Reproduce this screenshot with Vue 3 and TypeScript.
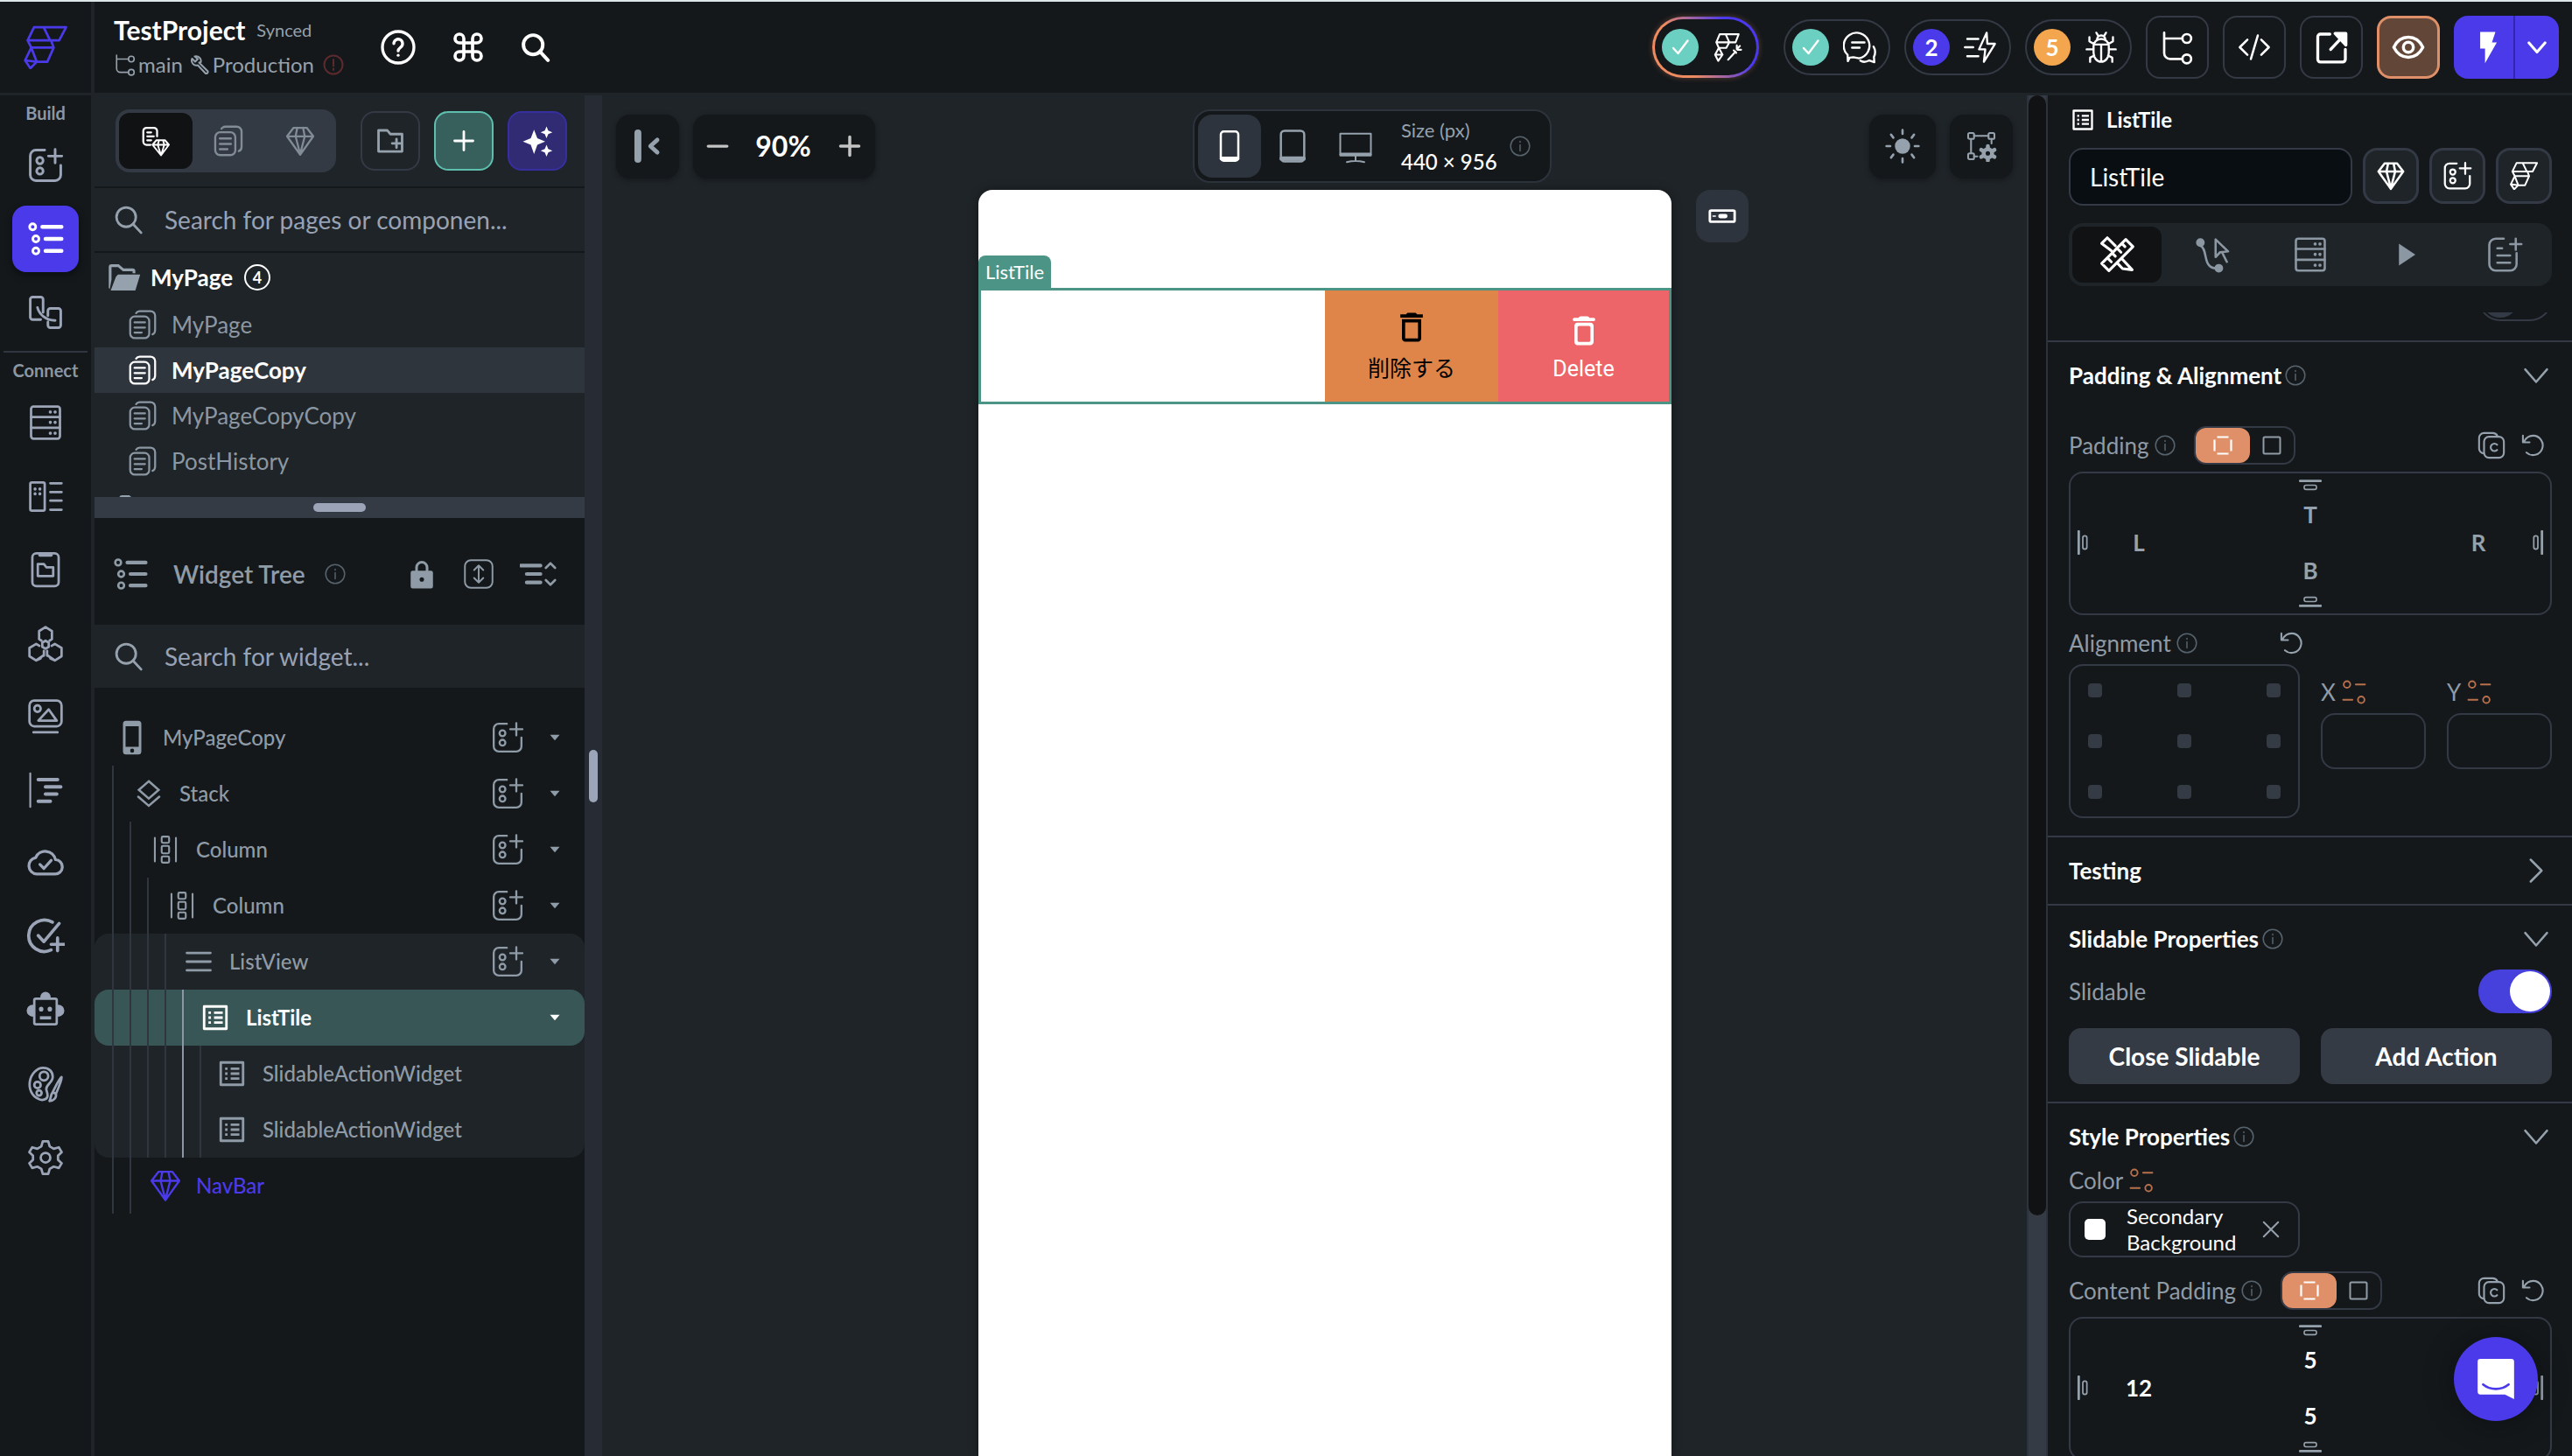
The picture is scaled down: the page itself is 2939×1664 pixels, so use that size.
<script setup lang="ts">
import { h, ref } from 'vue'

/* Icon bodies. A name maps to its markup inside a 24-unit box. */
const fillOnly = 'fill="currentColor" stroke="none"'
const icons: Record<string, string> = {
  branch: '<path d="M3 2v14a4 4 0 0 0 4 4h8.500M3 6h12.500"/><circle cx="18.500" cy="6" r="3"/><circle cx="18.500" cy="20" r="3"/>',
  wrench: '<path d="M10.500 9.500 20.500 19.500a2 2 0 0 1-2.500 2.500L9 12.500A5.500 5.500 0 0 1 2.500 5l3.500 3.500 3-3L5.500 2.500a5.500 5.500 0 0 1 7 6.500z"/>',
  alert: '<circle cx="12" cy="12" r="10.500"/><path d="M12 6v7.500M12 16.500v1.500"/>',
  help: '<circle cx="12" cy="12" r="10.800"/><path d="M9 9.500a3 3 0 1 1 4.800 2.400c-1 .8-1.800 1.300-1.800 2.600"/><circle cx="12" cy="17.500" r="1" fill="currentColor" stroke="none"/>',
  cmd: '<path d="M18 3a3 3 0 0 0-3 3v12a3 3 0 1 0 3-3H6a3 3 0 1 0 3 3V6a3 3 0 1 0-3 3h12a3 3 0 0 0 0-6z"/>',
  search: '<circle cx="10" cy="10" r="7.800"/><path d="M15.500 15.500 22 22.500"/>',
  addWidget: '<path d="M11.500 2.500H6a3.500 3.500 0 0 0-3.500 3.500v12A3.500 3.500 0 0 0 6 21.500h12a3.500 3.500 0 0 0 3.500-3.500v-6M18 2v8.500M13.800 6.200h8.400"/><circle cx="8.500" cy="9" r="2"/><circle cx="8.500" cy="15.500" r="2"/>',
  tree: '<circle cx="4" cy="4.500" r="1.900"/><circle cx="6" cy="12" r="1.900"/><circle cx="6" cy="19.500" r="1.900"/><path d="M10 4.500h12M12 12h10M12 19.500h10" stroke-width="2.400"/>',
  flow: '<path d="M10.500 12V4a1.500 1.500 0 0 0-1.500-1.500H4A1.500 1.500 0 0 0 2.500 4v11A1.500 1.500 0 0 0 4 16.500h5M13.500 14v-3a1.500 1.500 0 0 1 1.500-1.500h5a1.500 1.500 0 0 1 1.500 1.500v9a1.500 1.500 0 0 1-1.500 1.500h-5a1.500 1.500 0 0 1-1.500-1.500v-2M7 9c1 4 5 8 11 8"/>',
  server: '<rect x="3" y="2" width="18" height="20" rx="1.500"/><path d="M3 8.500h18M3 15.200h18"/><path d="M15 5.300v.1M18 5.300v.1M15 11.800v.1M18 11.800v.1M15 18.600v.1M18 18.600v.1" stroke-width="2"/>',
  api: '<rect x="2.500" y="3.500" width="9" height="17.500" rx="1"/><path d="M5.500 7.500v.1M8.500 7.500v.1M5.500 10.500v.1M8.500 10.500v.1" stroke-width="1.900"/><path d="M15 4h7M15 9.500h7M15 14.800h7M15 20.500h7"/>',
  appFile: '<rect x="3.800" y="1.800" width="16.400" height="20.500" rx="2.500"/><path d="M8.500 3h7" stroke-width="2"/><path d="M7.200 8.500h3.800l1.500 2h4.300V16H7.200z"/>',
  hex: '<path d="M9.500 10.500 8 9.500v-5l4-2.500 4 2.500v5l-1.500 1M9 21.500 6.200 22.800 2 20.200V15l4.200-2.500 2 1.200M11 19.500l-4.800 3.200M15 21.500l2.800 1.300L22 20.200V15l-4.200-2.500-2 1.200M13 19.500l4.800 3.200M11 16.800v3M13 16.800v3"/><path d="M12 10.500l2 1.200v2.600l-2 1.200-2-1.200v-2.600z"/>',
  media: '<rect x="2" y="2" width="20" height="16" rx="3"/><circle cx="7" cy="7" r="2"/><path d="M7.500 14.500 14 7.500l5 7zM4.500 21.800h15"/>',
  timeline: '<path d="M2.500 1.500v21" stroke-width="1.200"/><path d="M7.500 5.500h12M12 10h9.500M12 14.500h7M7.500 19h7.500" stroke-width="2.200"/>',
  cloud: '<path d="M6.500 18.500a5.200 5.200 0 0 1-.6-10.300 6.500 6.500 0 0 1 12.300 1.300 4.500 4.500 0 0 1-.4 9zM8.500 12.500l2.500 2.500 4.500-5" stroke-width="1.800"/>',
  checkPlus: '<path d="M15.500 20a9.800 9.800 0 1 1 .8-17.300M7.500 11l3.500 3.800L20.500 3.500M19.500 12.500v8M15.500 16.500h8" stroke-width="2"/>',
  robot: '<rect x="5" y="4.500" width="14" height="16" rx="1"/><path d="M9.500 3.500a2.500 2.500 0 0 1 5 0zM4 9a2.800 2.800 0 0 0 0 6zM20 9a2.800 2.800 0 0 1 0 6z" fill="currentColor"/><path d="M9.300 11v.2M14.700 11v.2" stroke-width="2.800"/><path d="M8.500 16.500h7" stroke-width="2" stroke-linecap="butt"/>',
  palette: '<path d="M12.500 21c-1.500 1-3.500 1-5 .2C3.500 19.300 1.500 15 2.200 10.500S6.500 1.800 10.500 1.800c3.500 0 6 2.200 6 5.700 0 3.500-4 4.500-4 7.500 0 2 2 4 0 6z"/><circle cx="11" cy="7" r="2.700"/><circle cx="7" cy="12.500" r="2"/><circle cx="8" cy="17.500" r="1.600"/><path d="M22 7.500c.5 1-3 9.500-3.500 10.500l-2-1C17 16 21 7.500 22 7.500zM16.500 17l2 1c.5 2.500-1.500 4.500-4 4.500 1-1.500.5-4 2-5.500z"/>',
  gear: '<circle cx="12" cy="12" r="3"/><path d="M10.300 1.800h3.400l.9 3.200 2.500 1.500 3.200-.9 1.800 3-2.300 2.200v2.500l2.300 2.200-1.800 3-3.200-.9-2.500 1.400-.9 3.200h-3.400L9.400 19l-2.500-1.400-3.200.9-1.800-3 2.300-2.200v-2.500L1.900 8.600l1.800-3 3.200.9L9.400 5z"/>',
  gem: '<path d="M7 2h10l5 6.500L12 22.500 2 8.500zM2 8.500h20M9.800 2 8.500 8.500 12 22l3.500-13.500L14.200 2"/>',
  pageGem: '<path d="M8 15H5a2.500 2.500 0 0 1-2.500-2.500v-8A2.500 2.500 0 0 1 5 2h5.500A2.500 2.500 0 0 1 13 4.500v4M5.500 5.500h3M5.500 8.500h5M5.500 11.500h3"/><path d="M12.500 11.500h6.500l3 3.500-6 8-6.500-8zM9.500 15h12.500M14.500 11.500 13.500 15l2.500 8 2.500-8-1-3.500" stroke-width="1.300"/>',
  pages: '<rect x="2.500" y="5.800" width="14.500" height="16.500" rx="3.500"/><path d="M7 3.200C7.600 2.300 8.500 1.700 9.700 1.700H18a3.500 3.500 0 0 1 3.500 3.500v11c0 1.500-.7 2.700-2 3.200M5.800 10.300h8M5.800 14.200h8M5.800 18h5.500"/>',
  folderPlus: '<path d="M2.500 3.500h7l2.500 3h9.500v14h-19zM17 10.500v7M13.500 14h7"/>',
  plus: '<path d="M12 3v18M3 12h18"/>',
  minus: '<path d="M2 12h20"/>',
  sparkle: `<g ${fillOnly}><path d="M9.500 3.500 12 10l6 2.500L12 15l-2.500 7L7 15l-6-2.500L7 10z"/><path d="M19 1l1.300 3.200L23.500 5.500l-3.200 1.300L19 10l-1.300-3.200L14.500 5.500l3.200-1.300zM19 15l1.300 3.200 3.200 1.300-3.200 1.300L19 24l-1.300-3.200-3.200-1.300 3.200-1.300z"/></g>`,
  folderOpen: `<path ${fillOnly} d="M7.500 10H23.500L20 21.500H2.200L6 11.500zM.8 4.500A2 2 0 0 1 2.800 2.500H8l3.500 3h6.500a2 2 0 0 1 2 2V9h-2V7.500h-7l-3.500-3H2.800v9L1.500 20.500l-.7-1z"/>`,
  lock: `<path ${fillOnly} d="M5 9.500h2V7a5 5 0 0 1 10 0v2.500h2a1.500 1.500 0 0 1 1.500 1.500v10.500A1.500 1.500 0 0 1 19 23H5a1.500 1.500 0 0 1-1.500-1.500V11A1.500 1.500 0 0 1 5 9.500zm4 0h6V7a3 3 0 0 0-6 0zm3 5a1.700 1.700 0 1 0 0 3.400 1.700 1.700 0 0 0 0-3.400z" fill-rule="evenodd"/>`,
  upDown: '<rect x="1.500" y="1.500" width="21" height="21" rx="4.500"/><path d="M12 5.500v13M8.500 9 12 5.500 15.500 9M8.500 15l3.500 3.500 3.500-3.500"/>',
  collapse: '<path d="M.5 6.500h13M4.500 12h9M4.500 17.500h9" stroke-width="2.400"/><path d="M17 8l3-3 3 3M17 16l3 3 3-3"/>',
  phone: `<path ${fillOnly} d="M8 1h8a2 2 0 0 1 2 2v18a2 2 0 0 1-2 2H8a2 2 0 0 1-2-2V3a2 2 0 0 1 2-2zm-.3 3.500v13.500h8.600V4.500zM12 19.200a1.300 1.300 0 1 0 0 2.600 1.300 1.300 0 0 0 0-2.600z" fill-rule="evenodd"/>`,
  stack: '<path d="M12 2l8 7-8 7-8-7zM3.500 14.500 12 21.800l8.500-7.300" stroke-linejoin="miter" stroke-width="1.800"/>',
  column: '<path d="M3.500 2.500v19M20.500 2.500v19"/><rect x="9" y="1.500" width="6" height="5" rx="1"/><rect x="9" y="9" width="6" height="6" rx="1"/><rect x="9" y="17.500" width="6" height="5" rx="1"/>',
  list: '<path d="M2.500 5h19M2.500 12h19M2.500 19h19" stroke-width="2"/>',
  tile: '<rect x="3" y="3" width="18" height="18" stroke-width="2"/><path d="M11 8h7M11 12h7M11 16h7M6.500 8h2M6.500 12h2M6.500 16h2" stroke-width="2" stroke-linecap="butt"/>',
  caret: `<path ${fillOnly} d="M1 5.500h22L12 18.500z"/>`,
  chevDown: '<path d="M2 6.500 12 18 22 6.500"/>',
  chevRight: '<path d="M7 2l10 10L7 22"/>',
  info: '<circle cx="12" cy="12" r="10.800"/><path d="M12 10.500v7M12 6.500v1"/>',
  hide: '<path d="M5 2.500v19" stroke-width="5"/><path d="M19 7.500 14 12l5 4.500" stroke-width="3"/>',
  devPhone: '<rect x="6" y="2" width="12" height="20" rx="2"/><path d="M6.500 20.500h11" stroke-width="2.500"/>',
  devTablet: '<rect x="4" y="1.500" width="16" height="21" rx="2.500"/><path d="M4.500 20.500h15" stroke-width="3"/>',
  desktop: '<path d="M1.500 3.500h21v15h-21zM12 19v3M6 23c4-1 8-1 12 0"/><path d="M2 17.500h20" stroke-width="2"/>',
  notch: '<rect x="2" y="7.500" width="20" height="9" rx="1" stroke-width="2"/><path d="M10.500 12h4" stroke-width="3.500"/><path d="M4.500 12h2" stroke-width="1"/>',
  sun: '<circle cx="12" cy="12" r="5" fill="currentColor" stroke="none"/><path d="M12 1.500V4M12 20v2.500M1.500 12H4M20 12h2.500M4.500 4.500l1.500 2M18 17.500l1.500 2M4.500 19.500l1.500-2M18 6.500l1.500-2"/>',
  nodes: '<rect x="2" y="2" width="4.500" height="4.500" rx="1"/><rect x="17.500" y="2" width="4.500" height="4.500" rx="1"/><rect x="2" y="17.500" width="4.500" height="4.500" rx="1"/><path d="M6.500 4.200h11M4.200 6.500v11M19.800 6.500V10M6.500 19.800H9"/><circle cx="17" cy="17.500" r="3.200" stroke-width="3"/><path d="M17 12v2M17 21v2M12 14.800l1.800 1M20.200 19.200l1.800 1M12 20.200l1.800-1M20.200 15.800l1.800-1" stroke-width="3"/>',
  check: '<path d="M4 13l5.500 6L20.500 4.500"/>',
  chat: '<path d="M4.800 19.500 3.500 22l-.2-4.500A9.300 9.300 0 1 1 11.500 20l-4-.8z"/><path d="M6.500 8.500h9M6.500 12.300h5.500M22 11.500c1.500 2.500 1.300 5.500.3 7.500l.3 3.800-3.600-1.300c-2.300 1.200-5 1.200-6.500.2"/>',
  boltLines: '<path d="M16.500 1.500 11 13.500h4.500L14.500 22.500 22.500 9.500h-5.500zM2.500 6h8M.8 12h6M2.500 18.500h8"/>',
  bug: '<path d="M6.500 11a5.500 5 0 0 1 11 0v5a5.500 6.500 0 0 1-11 0zM7 10h10M12 10v12M9 6.500a3 3 0 0 1 6 0M8.500 1.500l1.500 2.500M15.500 1.500 14 4M6.500 13.500h-5M22.500 13.500h-5M6.500 9.500l-3-1.800v-3M17.500 9.500l3-1.800v-3M7 18l-3 1.500v3M17 18l3 1.500v3"/>',
  code: '<path d="M7 6.500 1.500 12 7 17.500M17 6.500l5.500 5.500-5.500 5.500M14.500 3.500l-5 17"/>',
  open: '<path d="M11 3H4.500A1.800 1.800 0 0 0 2.700 4.800v15.500a1.800 1.800 0 0 0 1.800 1.800h15.300a1.800 1.800 0 0 0 1.800-1.800V13.500M11.500 13.500 20.500 4"/><path d="M14.500 2.500h7.500v8z" fill="currentColor"/>',
  eye: '<path d="M1.500 12C4 7 8 4.800 12 4.800S20 7 22.500 12C20 17 16 19.200 12 19.200S4 17 1.500 12z"/><circle cx="12" cy="12" r="3.600"/>',
  bolt: `<path ${fillOnly} d="M7 1h11l-2.500 7.500H19L10.500 23.500V13H7z"/>`,
  ruler: '<path d="M2.500 17.500 17.500 2.500l4.500 4.500L7 22zM15 5l2 2M12 8l2.500 2.500M9 11l2 2M6 14l2.500 2.500M8.500 9.500 2.500 5l3.500-3.500 5 5M15.500 15l6 6.500-6-.8-3-3.200"/>',
  action: '<circle cx="4" cy="4.500" r="2" fill="currentColor"/><circle cx="15.500" cy="20.500" r="2" fill="currentColor"/><path d="M4 6.500c5 2 1 14 10 14M13.500 2.500v11l2.800-3 5-.5zM17.500 10.500l3 6"/>',
  play: `<path ${fillOnly} d="M5 2v20L20 12z"/>`,
  docPlus: '<path d="M12 2H7a4 4 0 0 0-4 4v12a4 4 0 0 0 4 4h9a4 4 0 0 0 4-4v-7M19.500 2v7M16 5.500h7M8 8h3M8 12.500h8M8 17h8"/>',
  corners: '<path d="M5.500 2.500h13M5.500 21.500h13M2.500 5.500v13M21.500 5.500v13" stroke-linecap="butt"/>',
  square: '<rect x="2.500" y="2.500" width="19" height="19" rx="1.500"/>',
  copy: '<path d="M6 18.500A4 4 0 0 1 2 14.500V6a4 4 0 0 1 4-4h7c1.800 0 3 .8 3.700 2.200"/><rect x="6" y="5" width="16" height="17" rx="4"/><path d="M16.500 11.500a3 3 0 1 0 0 4.200"/>',
  undo: '<path d="M2.500 2.500v6.500h6.500M3.500 8.500C5.500 4.500 9 2.500 12.500 2.500a9.500 9.500 0 1 1-6.500 16.500"/>',
  variable: '<circle cx="5.500" cy="5" r="3"/><circle cx="18.500" cy="19" r="3"/><path d="M13.500 5H22M2 19h8.500"/>',
  close: '<path d="M3 3l18 18M21 3 3 21"/>',
  edgeTop: '<path d="M1 8h22" stroke-width="2.400"/><rect x="5.500" y="12.500" width="13" height="4.500" rx="2"/>',
  edgeBottom: '<path d="M1 16h22" stroke-width="2.400"/><rect x="5.500" y="7" width="13" height="4.500" rx="2"/>',
  edgeLeft: '<path d="M8 1v22" stroke-width="2.400"/><rect x="12" y="5.500" width="4" height="13" rx="2"/>',
  edgeRight: '<path d="M16 1v22" stroke-width="2.400"/><rect x="8" y="5.500" width="4" height="13" rx="2"/>',
  trashSharp: `<path ${fillOnly} d="M6 19c0 1.100.9 2 2 2h8c1.100 0 2-.9 2-2V7H6v12zM8 9h8v10H8V9zm7.500-5l-1-1h-5l-1 1H5v2h14V4h-3.500z"/>`,
  trashRound: `<path ${fillOnly} d="M6 19c0 1.100.9 2 2 2h8c1.100 0 2-.9 2-2V9c0-1.100-.9-2-2-2H8c-1.100 0-2 .9-2 2v10zm3-10h6c.55 0 1 .45 1 1v8c0 .55-.45 1-1 1H9c-.55 0-1-.45-1-1v-8c0-.55.45-1 1-1zm6.500-5l-.71-.71c-.18-.18-.44-.29-.7-.29H9.910c-.26 0-.52.11-.7.29L8.500 4H6c-.55 0-1 .45-1 1s.45 1 1 1h12c.55 0 1-.45 1-1s-.45-1-1-1h-2.500z"/>`,
  logo: '<path d="M5.700 1H23.300L19.500 8.200H2.200zM11 1l3.500 7.200M2.200 8.200l2 4H16.500L15 8.200M4.200 12.200 7.200 20H13l3.500-7.800M4.200 12.200.8 19.200 3.700 23.500 7.200 20M.8 19.200 7.200 20"/>',
  logoWand: '<path d="M5.700 1.500H21L18.500 8H3zM10.500 1.500l3 6.500M3 8l2 4.500h6L13.500 8M5 12.500 2 18l2.500 5L8 18zM2 18h6M12.500 22l6-6.500M19.500 10.500v3M23 14h-3M22 11l-1.500 1.500M17 14.500l2 2"/>',
  smile: '<path fill="#fff" stroke="none" d="M3.500 1h17A1.500 1.500 0 0 1 22 2.500V23l-5-2.500H3.500A1.500 1.500 0 0 1 2 19V2.500A1.500 1.500 0 0 1 3.500 1z"/><path stroke="#4b3ae9" d="M5 15c4 3.300 10 3.300 14 0" />'
}

interface IcoProps {
  name: string
  size: number
  w?: number
}

const Ico = (p: IcoProps) =>
  h('svg', {
    viewBox: '0 0 24 24',
    width: p.size,
    height: p.size,
    fill: 'none',
    stroke: 'currentColor',
    'stroke-width': p.w ?? 1.5,
    'stroke-linecap': 'round',
    'stroke-linejoin': 'round',
    'aria-hidden': 'true',
    innerHTML: icons[p.name]
  })
Ico.props = ['name', 'size', 'w']

const buildItems = [
  { icon: 'addWidget', label: 'Widget palette' },
  { icon: 'tree', label: 'Widget tree', active: true },
  { icon: 'flow', label: 'Storyboard' }
]
const connectItems = [
  { icon: 'server', label: 'Database' },
  { icon: 'api', label: 'Data types' },
  { icon: 'appFile', label: 'App values' },
  { icon: 'hex', label: 'API calls' },
  { icon: 'media', label: 'Media assets' },
  { icon: 'timeline', label: 'Custom functions' },
  { icon: 'cloud', label: 'Cloud functions' },
  { icon: 'checkPlus', label: 'Tests' },
  { icon: 'robot', label: 'Agents' },
  { icon: 'palette', label: 'Theme' },
  { icon: 'gear', label: 'Settings' }
]

const pages = ['MyPage', 'MyPageCopy', 'MyPageCopyCopy', 'PostHistory']
const currentPage = ref('MyPageCopy')

interface TreeNode {
  icon: string
  label: string
  depth: number
  add?: boolean
  caret?: boolean
  kind?: 'selected' | 'component'
}
const tree: TreeNode[] = [
  { icon: 'phone', label: 'MyPageCopy', depth: 0, add: true, caret: true },
  { icon: 'stack', label: 'Stack', depth: 1, add: true, caret: true },
  { icon: 'column', label: 'Column', depth: 2, add: true, caret: true },
  { icon: 'column', label: 'Column', depth: 3, add: true, caret: true }
]
const subtree: TreeNode[] = [
  { icon: 'list', label: 'ListView', depth: 4, add: true, caret: true },
  { icon: 'tile', label: 'ListTile', depth: 5, caret: true, kind: 'selected' },
  { icon: 'tile', label: 'SlidableActionWidget', depth: 6 },
  { icon: 'tile', label: 'SlidableActionWidget', depth: 6 }
]
const tail: TreeNode[] = [{ icon: 'gem', label: 'NavBar', depth: 2, kind: 'component' }]
const treeGroups = [
  { id: 'top', nodes: tree },
  { id: 'sub', nodes: subtree },
  { id: 'tail', nodes: tail }
]

const tabs = [
  { icon: 'ruler', label: 'Properties' },
  { icon: 'action', label: 'Actions' },
  { icon: 'server', label: 'Backend query' },
  { icon: 'play', label: 'Animations' },
  { icon: 'docPlus', label: 'Documentation' }
]

const widgetName = ref('ListTile')
const slidable = ref(true)
const expanded = ref(false)
const content = ref({ top: '5', left: '12', right: '', bottom: '5' })
</script>

<template>
  <div class="app">
    <header class="topbar">
      <a class="brand" href="#" aria-label="Home"><Ico name="logo" :size="50" :w="1.3" /></a>
      <div class="project">
        <div class="line">
          <h1>TestProject</h1>
          <span class="synced">Synced</span>
        </div>
        <div class="line meta">
          <Ico name="branch" :size="26" /><span class="m1">main</span>
          <Ico name="wrench" :size="24" :w="2" /><span>Production</span>
          <Ico class="warn" name="alert" :size="24" :w="2" />
        </div>
      </div>
      <nav class="quick">
        <button aria-label="Help"><Ico name="help" :size="40" :w="2" /></button>
        <button aria-label="Shortcuts"><Ico name="cmd" :size="40" :w="2.2" /></button>
        <button aria-label="Search"><Ico name="search" :size="34" :w="2.8" /></button>
      </nav>
      <div class="status">
        <button class="pill ai" aria-label="AI ready">
          <span class="dot ok"><Ico name="check" :size="24" :w="2.4" /></span><Ico name="logoWand" :size="34" />
        </button>
        <button class="pill" aria-label="Comments">
          <span class="dot ok"><Ico name="check" :size="24" :w="2.4" /></span><Ico name="chat" :size="38" />
        </button>
        <button class="pill" aria-label="Optimizations">
          <span class="dot blue">2</span><Ico name="boltLines" :size="38" />
        </button>
        <button class="pill" aria-label="Issues">
          <span class="dot orange">5</span><Ico name="bug" :size="38" />
        </button>
        <button class="sq" aria-label="Branches"><Ico name="branch" :size="40" :w="1.6" /></button>
        <button class="sq" aria-label="Code"><Ico name="code" :size="38" :w="1.6" /></button>
        <button class="sq" aria-label="Open"><Ico name="open" :size="40" :w="2" /></button>
        <button class="sq preview" aria-label="Preview"><Ico name="eye" :size="38" :w="2.2" /></button>
        <div class="run">
          <button aria-label="Run"><Ico name="bolt" :size="38" /></button>
          <button aria-label="Run options"><Ico name="chevDown" :size="22" :w="3.4" /></button>
        </div>
      </div>
    </header>

    <div class="body">
      <nav class="rail">
        <span class="cap">Build</span>
        <button v-for="i in buildItems" :key="i.label" :aria-label="i.label" class="cell">
          <span :class="['tilebg', { on: i.active }]"><Ico :name="i.icon" :size="44" :w="1.6" /></span>
        </button>
        <hr />
        <span class="cap connect">Connect</span>
        <button v-for="i in connectItems" :key="i.label" :aria-label="i.label" class="cell">
          <Ico :name="i.icon" :size="44" />
        </button>
      </nav>

      <aside class="left">
        <section class="pagepane">
          <div class="tools">
            <div class="seg">
              <button class="on" aria-label="All"><Ico name="pageGem" :size="36" /></button>
              <button aria-label="Pages"><Ico name="pages" :size="38" /></button>
              <button aria-label="Components"><Ico name="gem" :size="36" /></button>
            </div>
            <div class="acts">
              <button aria-label="New folder"><Ico name="folderPlus" :size="34" :w="2" /></button>
              <button class="add" aria-label="Add page"><Ico name="plus" :size="28" :w="2.4" /></button>
              <button class="magic" aria-label="Generate"><Ico name="sparkle" :size="36" /></button>
            </div>
          </div>
          <label class="find">
            <Ico name="search" :size="34" :w="2" />
            <input type="text" aria-label="Search pages" placeholder="Search for pages or componen..." />
          </label>
          <div class="folder"><Ico name="folderOpen" :size="38" /><b>MyPage</b><span class="count">4</span></div>
          <button
            v-for="p in pages"
            :key="p"
            :class="['page', { on: p === currentPage }]"
            @click="currentPage = p"
          >
            <Ico name="pages" :size="36" />{{ p }}
          </button>
          <div class="folder next"><Ico name="folderOpen" :size="38" /></div>
        </section>
        <div class="grip"><i></i></div>

        <section class="treepane">
          <div class="treehead">
            <Ico name="tree" :size="42" />
            <h2>Widget Tree</h2>
            <Ico class="dim" name="info" :size="24" />
            <div class="headacts">
              <button aria-label="Lock"><Ico name="lock" :size="36" /></button>
              <button aria-label="Expand height"><Ico name="upDown" :size="36" :w="1.3" /></button>
              <button aria-label="Collapse all"><Ico name="collapse" :size="42" /></button>
            </div>
          </div>
          <label class="find">
            <Ico name="search" :size="34" :w="2" />
            <input type="text" aria-label="Search widgets" placeholder="Search for widget..." />
          </label>
          <div class="tree">
            <div v-for="g in treeGroups" :key="g.id" :class="['group', g.id]">
              <div v-for="(n, i) in g.nodes" :key="i" :class="['node', n.kind, 'd' + n.depth]">
                <i v-for="k in n.depth" :key="k" class="guide" :class="{ lit: g.id === 'sub' && k === 5 }" :style="{ left: k * 20 + 'px' }"></i>
                <span class="nicon"><Ico :name="n.icon" :size="n.icon === 'phone' ? 42 : n.icon === 'gem' ? 38 : 34" /></span>
                <span class="nlabel">{{ n.label }}</span>
                <button v-if="n.add" aria-label="Add child"><Ico name="addWidget" :size="40" :w="1.4" /></button>
                <button v-if="n.caret" class="caret" aria-label="Toggle"><Ico name="caret" :size="12" /></button>
              </div>
            </div>
          </div>
        </section>
      </aside>
      <div class="gutter"><i></i></div>

      <main class="canvas">
        <div class="cbar">
          <div class="cgroup">
            <button class="box hidebtn" aria-label="Hide panel"><Ico name="hide" :size="38" /></button>
            <div class="box zoom">
              <button aria-label="Zoom out"><Ico name="minus" :size="26" :w="3" /></button>
              <span>90%</span>
              <button aria-label="Zoom in"><Ico name="plus" :size="28" :w="3" /></button>
            </div>
          </div>
          <div class="devices">
            <button class="on" aria-label="Phone"><Ico name="devPhone" :size="40" /></button>
            <button aria-label="Tablet"><Ico name="devTablet" :size="40" /></button>
            <button aria-label="Desktop"><Ico name="desktop" :size="40" :w="1.2" /></button>
            <div class="size"><span>Size (px)</span><b>440 × 956</b></div>
            <Ico class="dim" name="info" :size="24" />
          </div>
          <div class="cgroup">
            <button class="box sun" aria-label="Light mode"><Ico name="sun" :size="42" /></button>
            <button class="box" aria-label="Canvas settings"><Ico name="nodes" :size="36" :w="1.4" /></button>
          </div>
        </div>
        <div class="stage">
          <div class="phone">
            <div class="row">
              <span class="tag">ListTile</span>
              <div class="act warnact"><Ico name="trashSharp" :size="44" /><span>削除する</span></div>
              <div class="act delact"><Ico name="trashRound" :size="44" /><span>Delete</span></div>
            </div>
          </div>
          <button class="notch" aria-label="Toggle status bar"><Ico name="notch" :size="34" /></button>
        </div>
      </main>
      <div class="track"><i></i></div>

      <aside class="props">
        <div class="ptop">
          <div class="ptitle"><Ico name="tile" :size="28" /><h2>ListTile</h2></div>
          <div class="prow">
            <input v-model="widgetName" type="text" aria-label="Widget name" />
            <button aria-label="Convert to component"><Ico name="gem" :size="34" :w="1.8" /></button>
            <button aria-label="Wrap widget"><Ico name="addWidget" :size="36" /></button>
            <button aria-label="Open details"><Ico name="logo" :size="32" /></button>
          </div>
          <div class="tabs">
            <button v-for="(t, i) in tabs" :key="t.label" :class="{ on: i === 0 }" :aria-label="t.label">
              <Ico :name="t.icon" :size="t.icon === 'play' ? 30 : 44" :w="i ? 1.4 : 1.7" />
            </button>
          </div>
        </div>

        <div class="scroll">
          <div class="clipped"><input v-model="expanded" class="switch" type="checkbox" role="switch" aria-label="Expanded" /></div>

          <section>
            <div class="shead"><h3>Padding &amp; Alignment</h3><Ico class="dim" name="info" :size="24" /><button aria-label="Collapse"><Ico name="chevDown" :size="30" :w="2" /></button></div>
            <div class="lrow first">
              <span>Padding</span><Ico class="dim" name="info" :size="24" />
              <div class="mode"><button class="on" aria-label="Each side"><Ico name="corners" :size="24" :w="2.2" /></button><button aria-label="All sides"><Ico name="square" :size="24" :w="2" /></button></div>
              <div class="ends"><button aria-label="Copy"><Ico name="copy" :size="34" :w="1.5" /></button><button aria-label="Reset"><Ico name="undo" :size="28" :w="1.8" /></button></div>
            </div>
            <div class="padbox">
              <Ico class="et" name="edgeTop" :size="26" /><input class="t" placeholder="T" aria-label="Padding top" />
              <Ico class="el" name="edgeLeft" :size="28" /><input class="l" placeholder="L" aria-label="Padding left" />
              <input class="r" placeholder="R" aria-label="Padding right" /><Ico class="er" name="edgeRight" :size="28" />
              <input class="b" placeholder="B" aria-label="Padding bottom" /><Ico class="eb" name="edgeBottom" :size="26" />
            </div>
            <div class="cols">
              <div class="half">
                <div class="lrow small"><span>Alignment</span><Ico class="dim" name="info" :size="24" /><div class="ends"><button aria-label="Reset alignment"><Ico name="undo" :size="28" :w="1.8" /></button></div></div>
                <div class="dots"><button v-for="n in 9" :key="n" :aria-label="'Align ' + n"></button></div>
              </div>
              <div class="half xy">
                <label><span class="lrow small">X<Ico class="var" name="variable" :size="30" /></span><input type="text" /></label>
                <label><span class="lrow small">Y<Ico class="var" name="variable" :size="30" /></span><input type="text" /></label>
              </div>
            </div>
          </section>

          <section class="flat">
            <div class="shead"><h3>Testing</h3><button aria-label="Expand"><Ico name="chevRight" :size="30" :w="2" /></button></div>
          </section>

          <section>
            <div class="shead"><h3>Slidable Properties</h3><Ico class="dim" name="info" :size="24" /><button aria-label="Collapse"><Ico name="chevDown" :size="30" :w="2" /></button></div>
            <div class="lrow"><label for="slidable">Slidable</label><div class="ends flush"><input id="slidable" v-model="slidable" class="switch" type="checkbox" role="switch" /></div></div>
            <div class="btns"><button>Close Slidable</button><button>Add Action</button></div>
          </section>

          <section>
            <div class="shead"><h3>Style Properties</h3><Ico class="dim" name="info" :size="24" /><button aria-label="Collapse"><Ico name="chevDown" :size="30" :w="2" /></button></div>
            <div class="lrow tight"><span>Color</span><Ico class="var" name="variable" :size="30" /></div>
            <div class="chip"><i></i><span>Secondary Background</span><button aria-label="Clear color"><Ico name="close" :size="22" :w="2.2" /></button></div>
            <div class="lrow">
              <span>Content Padding</span><Ico class="dim" name="info" :size="24" />
              <div class="mode"><button class="on" aria-label="Each side"><Ico name="corners" :size="24" :w="2.2" /></button><button aria-label="All sides"><Ico name="square" :size="24" :w="2" /></button></div>
              <div class="ends"><button aria-label="Copy"><Ico name="copy" :size="34" :w="1.5" /></button><button aria-label="Reset"><Ico name="undo" :size="28" :w="1.8" /></button></div>
            </div>
            <div class="padbox">
              <Ico class="et" name="edgeTop" :size="26" /><input v-model="content.top" class="t" aria-label="Content top" />
              <Ico class="el" name="edgeLeft" :size="28" /><input v-model="content.left" class="l" aria-label="Content left" />
              <input v-model="content.right" class="r" aria-label="Content right" /><Ico class="er" name="edgeRight" :size="28" />
              <input v-model="content.bottom" class="b" aria-label="Content bottom" /><Ico class="eb" name="edgeBottom" :size="26" />
            </div>
          </section>
        </div>
      </aside>
    </div>
    <button class="intercom" aria-label="Open chat"><Ico name="smile" :size="50" :w="1.3" /></button>
  </div>
</template>

<style>
body {
  margin: 0;
  background: #14181b;
}
</style>

<style scoped>
.app,
.app * {
  box-sizing: border-box;
}
.app {
  --ink: #14181b;
  --panel: #1f2428;
  --line: #343a45;
  --mute: #95a1ac;
  --cool: #9ba5b7;
  --blue: #4b3ae9;
  position: relative;
  height: 100vh;
  overflow: hidden;
  display: flex;
  flex-direction: column;
  border-top: 2px solid #dde7ea;
  background: var(--ink);
  color: #fff;
  font-family: Lato, 'Noto Sans CJK JP', sans-serif;
  font-size: 26px;
  line-height: 32px;
}
button {
  display: flex;
  align-items: center;
  justify-content: center;
  padding: 0;
  border: 0;
  background: none;
  color: inherit;
  font: inherit;
}
input {
  min-width: 0;
  border: 0;
  padding: 0;
  outline: 0;
  background: none;
  color: inherit;
  font: inherit;
}
h1,
h2,
h3 {
  margin: 0;
  font: inherit;
}
svg {
  display: block;
  flex: none;
}
.dim {
  color: #57636c;
}

/* top bar */
.topbar {
  flex: none;
  display: flex;
  height: 107px;
  border-bottom: 3px solid var(--panel);
}
.brand {
  width: 108px;
  flex: none;
  display: flex;
  align-items: center;
  justify-content: center;
  border-right: 4px solid var(--panel);
  color: var(--blue);
}
.project {
  display: flex;
  flex-direction: column;
  padding: 16px 0 0 22px;
  gap: 8px;
}
.line {
  display: flex;
  align-items: center;
  height: 32px;
}
.line h1 {
  font-size: 30px;
  font-weight: 700;
}
.synced {
  margin-left: 13px;
  font-size: 20px;
  color: var(--mute);
}
.meta {
  font-size: 24px;
  color: var(--mute);
  gap: 2px;
}
.m1 {
  margin-right: 6px;
}
.warn {
  margin-left: 8px;
  color: #5c2a2c;
}
.quick {
  display: flex;
  align-items: center;
  margin-left: 42px;
  gap: 40px;
}
.status {
  flex: 1;
  display: flex;
  align-items: center;
  justify-content: flex-end;
  gap: 16px;
  padding-right: 15px;
}
.pill {
  width: 122px;
  height: 64px;
  border: 2px solid var(--line);
  border-radius: 32px;
  justify-content: flex-start;
  padding-left: 8px;
  gap: 16px;
}
.pill.ai {
  height: 70px;
  margin-right: 12px;
  border: 3px solid transparent;
  border-radius: 35px;
  background:
    linear-gradient(#14181b, #14181b) padding-box,
    linear-gradient(60deg, #ee8b60 30%, #4b39ef 75%) border-box;
  box-shadow: 0 0 6px #ee8b6055;
}
.dot {
  display: flex;
  align-items: center;
  justify-content: center;
  width: 42px;
  height: 42px;
  border-radius: 50%;
  font-weight: 700;
}
.ok {
  background: #6bd0c1;
}
.blue {
  background: var(--blue);
}
.orange {
  background: #f3a64d;
}
.sq {
  width: 72px;
  height: 72px;
  border: 2px solid var(--line);
  border-radius: 16px;
}
.preview {
  border: 3px solid #df9069;
  background: #624638;
}
.run {
  display: flex;
  width: 120px;
  height: 72px;
  border-radius: 16px;
  background: var(--blue);
}
.run button:first-child {
  width: 70px;
  padding-left: 8px;
  border-right: 2px solid #3325b0;
}
.run button:last-child {
  flex: 1;
}

/* rail */
.body {
  flex: 1;
  min-height: 0;
  display: flex;
}
.rail {
  width: 108px;
  flex: none;
  display: flex;
  flex-direction: column;
  border-right: 4px solid var(--panel);
  color: var(--cool);
}
.cap {
  height: 38px;
  padding-top: 4px;
  text-align: center;
  font-size: 20px;
  font-weight: 700;
  color: #8b97a2;
}
.cell {
  height: 84px;
}
.rail .cell .tilebg {
  display: flex;
  align-items: center;
  justify-content: center;
  width: 76px;
  height: 76px;
  border-radius: 16px;
}
.tilebg.on {
  background: var(--blue);
  color: #fff;
  box-shadow: 0 4px 8px #0006;
}
.rail hr {
  width: 96px;
  height: 2px;
  margin: 2px auto 0;
  border: 0;
  background: #2f3640;
}

/* left panel */
.left {
  width: 560px;
  flex: none;
  display: flex;
  flex-direction: column;
}
.pagepane {
  height: 459px;
  flex: none;
  overflow: hidden;
  background: var(--panel);
}
.tools {
  display: flex;
  align-items: center;
  justify-content: space-between;
  height: 106px;
  padding: 0 20px 0 24px;
  border-bottom: 2px solid var(--ink);
}
.seg {
  display: flex;
  width: 252px;
  height: 72px;
  padding: 4px 0 4px 4px;
  border-radius: 16px;
  background: #343a44;
  color: #818c97;
}
.seg button {
  flex: 1;
  border-radius: 12px;
}
.seg .on {
  flex: none;
  width: 84px;
  background: #101213;
  color: #fff;
}
.acts {
  display: flex;
  gap: 16px;
}
.acts button {
  width: 68px;
  height: 68px;
  border: 2px solid var(--line);
  border-radius: 16px;
  color: var(--mute);
}
.acts .add {
  border-color: #5fbfae;
  background: #37605d;
  color: #fff;
}
.acts .magic {
  border-color: #372fa0;
  background: #302b73;
  color: #fff;
}
.find {
  display: flex;
  align-items: center;
  height: 74px;
  padding: 0 22px;
  gap: 24px;
  border-bottom: 2px solid var(--ink);
  background: var(--panel);
  color: var(--mute);
  font-size: 28px;
}
.find input {
  flex: 1;
  height: 40px;
}
.find input::placeholder {
  color: #98a2b3;
  opacity: 1;
}
.folder {
  display: flex;
  align-items: center;
  height: 56px;
  padding-left: 15px;
  gap: 11px;
  color: var(--mute);
}
.folder b {
  color: #fff;
}
.count {
  width: 30px;
  height: 30px;
  margin-left: 2px;
  border: 2px solid #fff;
  border-radius: 50%;
  color: #fff;
  font-size: 18px;
  font-weight: 700;
  line-height: 26px;
  text-align: center;
}
.page {
  width: 100%;
  height: 52px;
  justify-content: flex-start;
  padding-left: 37px;
  gap: 15px;
  color: #8b97a2;
}
.page.on {
  background: #2f353d;
  color: #fff;
  font-weight: 700;
}
.folder.next {
  padding-left: 27px;
}
.grip {
  display: flex;
  align-items: center;
  justify-content: center;
  height: 24px;
  background: #353b45;
}
.grip i {
  width: 60px;
  height: 10px;
  border-radius: 5px;
  background: var(--cool);
}
.treepane {
  flex: 1;
  color: #8f9ba6;
}
.treehead {
  display: flex;
  align-items: center;
  height: 122px;
  padding: 6px 32px 0 20px;
}
.treehead h2 {
  margin: 0 22px 0 28px;
  font-size: 28px;
  font-weight: 600;
}
.headacts {
  display: flex;
  flex: 1;
  justify-content: flex-end;
  gap: 29px;
}
.treepane .find {
  border: 0;
  height: 72px;
}
.tree {
  padding-top: 25px;
}
.group.sub {
  border-radius: 16px;
  background: var(--panel);
}
.node {
  position: relative;
  display: flex;
  align-items: center;
  height: 64px;
  padding-right: 28px;
  font-size: 24px;
  font-weight: 500;
}
.d0 {
  padding-left: 20px;
}
.d1 {
  padding-left: 39px;
}
.d2 {
  padding-left: 58px;
}
.d3 {
  padding-left: 77px;
}
.d4 {
  padding-left: 96px;
}
.d5 {
  padding-left: 115px;
}
.d6 {
  padding-left: 134px;
}
.guide {
  position: absolute;
  top: 0;
  bottom: 0;
  width: 2px;
  background: #2f3640;
}
.guide.lit {
  background: #8b97a2;
}
.nicon {
  display: flex;
  justify-content: center;
  width: 46px;
  margin-right: 12px;
}
.nlabel {
  flex: 1;
}
.node.selected {
  border-radius: 16px;
  background: #395657;
  color: #fff;
  font-weight: 700;
}
.node.component {
  color: var(--blue);
}
.caret {
  margin-left: 28px;
}
.gutter {
  display: flex;
  align-items: center;
  justify-content: center;
  width: 20px;
  flex: none;
  background: #262b34;
}
.gutter i {
  width: 10px;
  height: 60px;
  border-radius: 5px;
  background: var(--cool);
}

/* canvas */
.canvas {
  flex: 1;
  min-width: 0;
  display: flex;
  flex-direction: column;
  padding: 16px 0 0;
  background: var(--panel);
}
.cbar {
  display: flex;
  align-items: center;
  justify-content: space-between;
  height: 84px;
  padding: 0 16px;
}
.cgroup {
  display: flex;
  gap: 16px;
}
.box {
  display: flex;
  align-items: center;
  justify-content: center;
  width: 72px;
  height: 73px;
  border-radius: 16px;
  background: var(--ink);
  color: var(--mute);
  box-shadow: 0 2px 6px #0005;
}
.box.sun {
  width: 76px;
}
.box.zoom {
  width: 208px;
  justify-content: space-between;
  padding: 0 15px;
}
.zoom button {
  color: #c4c4c4;
}
.zoom span {
  color: #fff;
  font-size: 32px;
  font-weight: 700;
}
.devices {
  display: flex;
  align-items: center;
  width: 410px;
  height: 84px;
  padding: 0 22px 0 4px;
  border: 2px solid #2d333c;
  border-radius: 20px;
  background: var(--ink);
  color: var(--mute);
}
.devices button {
  width: 72px;
  height: 72px;
  border-radius: 16px;
}
.devices .on {
  background: #2d343d;
  color: #fff;
}
.size {
  flex: 1;
  display: flex;
  flex-direction: column;
  gap: 4px;
  padding-left: 16px;
  font-size: 22px;
}
.size b {
  color: #fff;
  font-size: 24px;
  font-weight: 500;
}
.stage {
  flex: 1;
  display: flex;
  justify-content: center;
  align-items: flex-start;
  gap: 28px;
  padding: 8px 0 0 112px;
}
.phone {
  align-self: stretch;
  width: 792px;
  flex: none;
  padding-top: 112px;
  border-radius: 16px 16px 0 0;
  background: #fff;
  box-shadow: 0 0 12px #0005;
}
.row {
  position: relative;
  display: flex;
  justify-content: flex-end;
  height: 133px;
  border: 3px solid #4b9486;
}
.tag {
  position: absolute;
  left: -3px;
  bottom: 127px;
  height: 40px;
  padding: 0 8px;
  border-radius: 8px 8px 0 0;
  background: #4b9486;
  font-size: 22px;
  line-height: 38px;
}
.act {
  display: flex;
  flex-direction: column;
  align-items: center;
  justify-content: center;
  gap: 8px;
  font-family: Roboto, 'Noto Sans CJK JP', sans-serif;
  font-size: 25px;
  line-height: 28px;
}
.warnact {
  width: 198px;
  background: #df8549;
  color: #000;
  line-height: 36px;
}
.delact {
  width: 195px;
  background: #ee6569;
}
.notch {
  width: 60px;
  height: 60px;
  border-radius: 16px;
  background: #2d343d;
}
.track {
  width: 24px;
  flex: none;
  border: 2px solid #2d333c;
  border-width: 0 2px;
  background: #353b45;
}
.track i {
  display: block;
  height: 82.3%;
  border-radius: 10px;
  background: #101213;
}

/* properties */
.props {
  width: 599px;
  flex: none;
  display: flex;
  flex-direction: column;
}
.ptop {
  padding: 8px 23px 30px 24px;
}
.ptitle {
  display: flex;
  align-items: center;
  height: 40px;
  padding-left: 2px;
  gap: 13px;
  font-size: 24px;
  font-weight: 700;
}
.prow {
  display: flex;
  gap: 12px;
  margin: 12px 0 20px;
}
.prow input {
  flex: 1;
  height: 66px;
  padding: 0 22px;
  border: 2px solid var(--line);
  border-radius: 16px;
  background: #090e13;
  font-size: 28px;
}
.prow button {
  width: 64px;
  height: 64px;
  border: 3px solid var(--line);
  border-radius: 16px;
  background: var(--panel);
}
.tabs {
  display: flex;
  height: 72px;
  padding: 4px 0 4px 4px;
  border-radius: 16px;
  background: var(--panel);
  color: #8b97a2;
}
.tabs button {
  flex: 1;
  border-radius: 12px;
}
.tabs .on {
  flex: none;
  width: 102px;
  margin-right: 4px;
  background: #101213;
  color: #fff;
}
.scroll {
  flex: 1;
  min-height: 0;
  overflow: hidden;
}
.clipped {
  display: flex;
  align-items: flex-end;
  justify-content: flex-end;
  height: 32px;
  padding: 0 23px 22px;
}
.scroll section {
  padding: 0 23px 20px 24px;
  border-top: 2px solid var(--line);
}
.scroll .flat {
  padding-bottom: 0;
}
.shead {
  display: flex;
  align-items: center;
  height: 76px;
  gap: 4px;
}
.shead h3 {
  font-weight: 700;
}
.shead button {
  margin-left: auto;
  margin-right: 3px;
  color: var(--mute);
}
.lrow {
  display: flex;
  align-items: center;
  height: 44px;
  gap: 6px;
  color: #8f9ba6;
}
.lrow.first {
  margin-top: 20px;
}
.lrow.small {
  height: 32px;
}
.lrow.tight {
  height: 24px;
  margin-bottom: 12px;
}
.var {
  color: #b8704c;
}
.mode {
  display: flex;
  width: 116px;
  height: 44px;
  margin-left: 15px;
  border: 2px solid var(--line);
  border-radius: 14px;
}
.mode button {
  flex: 1;
}
.mode .on {
  flex: none;
  width: 62px;
  border-radius: 12px;
  background: #df9069;
  color: #fff;
}
.ends {
  display: flex;
  align-items: center;
  gap: 16px;
  margin-left: auto;
  padding-right: 8px;
  color: var(--mute);
}
.flush {
  padding: 0;
}
.half .ends {
  margin-right: -4px;
  padding: 0;
}
.padbox {
  display: grid;
  grid-template-columns: 28px 1fr 1fr 1fr 28px;
  grid-template-rows: 31px 32px 32px 32px 33px;
  place-items: center;
  height: 164px;
  margin-top: 8px;
  border: 2px solid var(--line);
  border-radius: 16px;
  color: var(--mute);
}
.padbox input {
  width: 60px;
  height: 32px;
  text-align: center;
  color: #fff;
  font-weight: 700;
}
.padbox input::placeholder {
  color: var(--mute);
  opacity: 1;
}
.et {
  grid-area: 1 / 3;
  align-self: start;
}
.t {
  grid-area: 2 / 3;
}
.el {
  grid-area: 3 / 1;
}
.l {
  grid-area: 3 / 2;
  justify-self: start;
  margin-left: 20px;
}
.r {
  grid-area: 3 / 4;
  justify-self: end;
  margin-right: 24px;
}
.er {
  grid-area: 3 / 5;
}
.b {
  grid-area: 4 / 3;
}
.eb {
  grid-area: 5 / 3;
  align-self: end;
}
.cols {
  display: flex;
  gap: 24px;
  margin-top: 16px;
}
.half {
  flex: 1;
}
.dots {
  display: grid;
  grid-template-columns: repeat(3, 16px);
  justify-content: space-between;
  align-content: space-between;
  height: 176px;
  margin-top: 8px;
  padding: 20px;
  border: 2px solid var(--line);
  border-radius: 16px;
}
.dots button {
  height: 16px;
  border-radius: 4px;
  background: #353b45;
}
.xy {
  display: flex;
  gap: 24px;
  padding-top: 56px;
}
.xy label {
  flex: 1;
  min-width: 0;
}
.xy input {
  width: 100%;
  height: 64px;
  margin-top: 8px;
  padding: 0 12px;
  border: 2px solid var(--line);
  border-radius: 16px;
}
.switch {
  appearance: none;
  display: flex;
  flex: none;
  width: 84px;
  height: 50px;
  margin: 0;
  padding: 2px;
  border: 2px solid var(--line);
  border-radius: 25px;
}
.switch::before {
  content: '';
  width: 42px;
  border-radius: 50%;
  background: var(--line);
}
.switch:checked {
  justify-content: flex-end;
  padding: 0;
  background: #4640dc;
  border-color: #4640dc;
}
.switch:checked::before {
  width: 46px;
  background: #fff;
}
.btns {
  display: flex;
  gap: 24px;
  margin-top: 20px;
}
.btns button {
  flex: 1;
  height: 64px;
  border-radius: 14px;
  background: #353b45;
  font-size: 28px;
  font-weight: 700;
}
.chip {
  display: flex;
  align-items: center;
  width: 264px;
  height: 64px;
  margin-bottom: 16px;
  padding: 0 20px 0 16px;
  border: 2px solid var(--line);
  border-radius: 16px;
  font-size: 24px;
  line-height: 30px;
}
.chip i {
  width: 24px;
  height: 24px;
  flex: none;
  border-radius: 5px;
  background: #fff;
}
.chip span {
  flex: 1;
  margin-left: 24px;
}
.chip button {
  color: var(--mute);
}
.intercom {
  position: absolute;
  right: 39px;
  bottom: 40px;
  width: 96px;
  height: 96px;
  border-radius: 50%;
  background: var(--blue);
  box-shadow: 0 2px 36px #0005;
}
</style>
